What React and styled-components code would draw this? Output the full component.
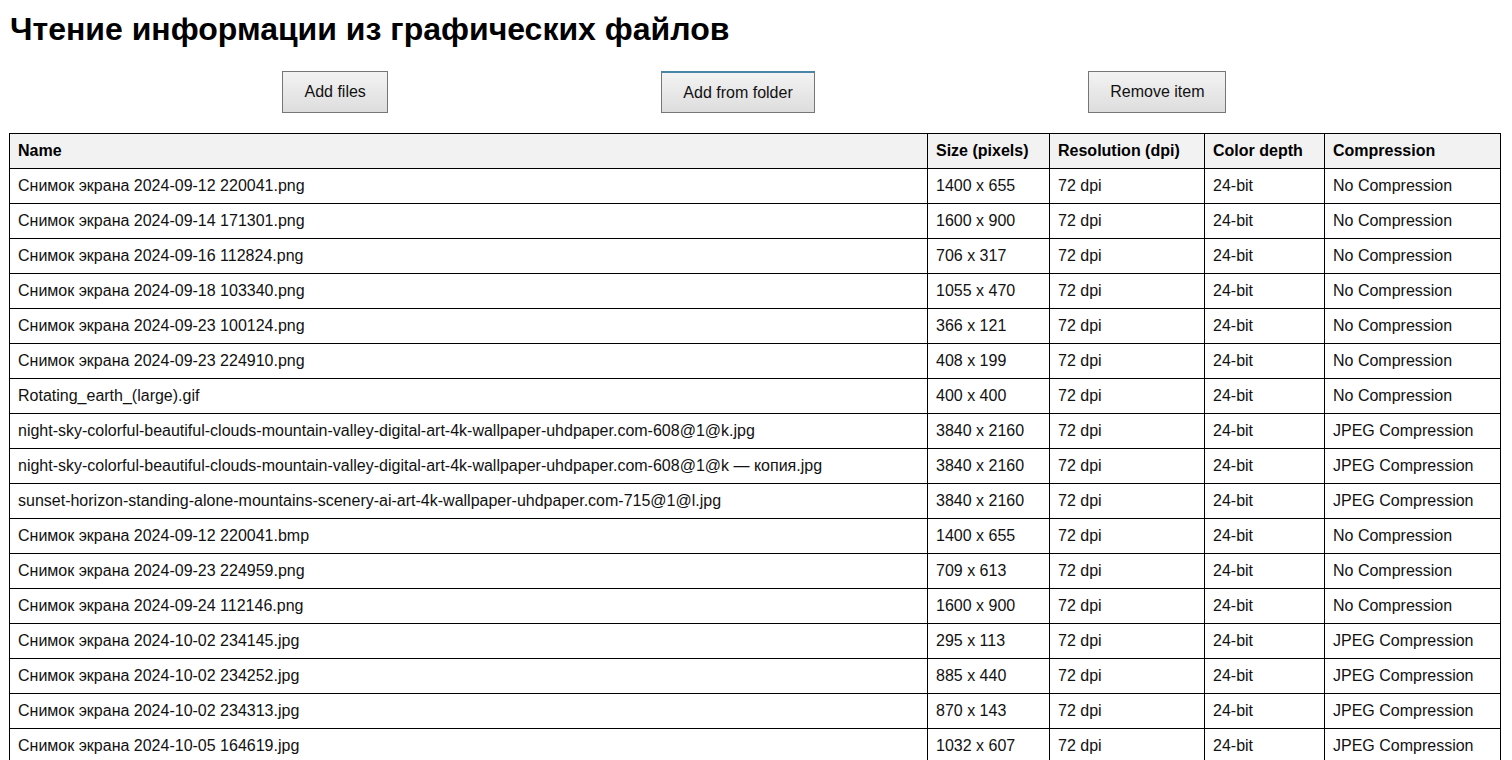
import React from "react";
import styled, { createGlobalStyle } from "styled-components";

const GlobalStyle = createGlobalStyle`
  html, body {
    margin: 0;
    padding: 0;
    background: #ffffff;
    font-family: "Liberation Sans", Arial, sans-serif;
    color: #000;
  }
`;

const Page = styled.div`
  padding: 0 12px 0 9px;
`;

const Title = styled.h1`
  margin: 0;
  padding: 11px 0 0 1px;
  font-size: 32px;
  line-height: 37px;
  font-weight: 700;
`;

const Toolbar = styled.div`
  display: flex;
  justify-content: space-evenly;
  margin: 23px 0 20px 0;
`;

const Button = styled.button`
  height: 42px;
  padding: 0 21px;
  font-family: "Liberation Sans", Arial, sans-serif;
  font-size: 16px;
  color: #111;
  background: linear-gradient(#f3f3f3, #dddddd);
  border: 1px solid #767676;
  border-top-color: ${(p) => (p.$focused ? "#4a86a8" : "#767676")};
  border-top-width: ${(p) => (p.$focused ? "2px" : "1px")};
  cursor: pointer;
`;

const Table = styled.table`
  width: 1491px;
  border-collapse: collapse;
  table-layout: fixed;
  font-size: 16px;
`;

const HeadCell = styled.th`
  box-sizing: border-box;
  width: ${(p) => p.$w}px;
  text-align: left;
  font-weight: 700;
  background: #f2f2f2;
  border: 1px solid #000;
  padding: 8px 8px;
  line-height: 18px;
`;

const Cell = styled.td`
  border: 1px solid #000;
  padding: 8px 8px;
  line-height: 18px;
  white-space: nowrap;
  overflow: hidden;
  color: #111;
`;

const columns = [
  { key: "name", title: "Name", w: 918 },
  { key: "size", title: "Size (pixels)", w: 122 },
  { key: "res", title: "Resolution (dpi)", w: 155 },
  { key: "depth", title: "Color depth", w: 120 },
  { key: "comp", title: "Compression", w: 176 },
];

const NO = "No Compression";
const JPEG = "JPEG Compression";

const rows = [
  ["Снимок экрана 2024-09-12 220041.png", "1400 x 655", NO],
  ["Снимок экрана 2024-09-14 171301.png", "1600 x 900", NO],
  ["Снимок экрана 2024-09-16 112824.png", "706 x 317", NO],
  ["Снимок экрана 2024-09-18 103340.png", "1055 x 470", NO],
  ["Снимок экрана 2024-09-23 100124.png", "366 x 121", NO],
  ["Снимок экрана 2024-09-23 224910.png", "408 x 199", NO],
  ["Rotating_earth_(large).gif", "400 x 400", NO],
  [
    "night-sky-colorful-beautiful-clouds-mountain-valley-digital-art-4k-wallpaper-uhdpaper.com-608@1@k.jpg",
    "3840 x 2160",
    JPEG,
  ],
  [
    "night-sky-colorful-beautiful-clouds-mountain-valley-digital-art-4k-wallpaper-uhdpaper.com-608@1@k — копия.jpg",
    "3840 x 2160",
    JPEG,
  ],
  [
    "sunset-horizon-standing-alone-mountains-scenery-ai-art-4k-wallpaper-uhdpaper.com-715@1@l.jpg",
    "3840 x 2160",
    JPEG,
  ],
  ["Снимок экрана 2024-09-12 220041.bmp", "1400 x 655", NO],
  ["Снимок экрана 2024-09-23 224959.png", "709 x 613", NO],
  ["Снимок экрана 2024-09-24 112146.png", "1600 x 900", NO],
  ["Снимок экрана 2024-10-02 234145.jpg", "295 x 113", JPEG],
  ["Снимок экрана 2024-10-02 234252.jpg", "885 x 440", JPEG],
  ["Снимок экрана 2024-10-02 234313.jpg", "870 x 143", JPEG],
  ["Снимок экрана 2024-10-05 164619.jpg", "1032 x 607", JPEG],
];

export default function App() {
  return (
    <Page>
      <GlobalStyle />
      <Title>Чтение информации из графических файлов</Title>
      <Toolbar>
        <Button>Add files</Button>
        <Button $focused>Add from folder</Button>
        <Button>Remove item</Button>
      </Toolbar>
      <Table>
        <thead>
          <tr>
            {columns.map((c) => (
              <HeadCell key={c.key} $w={c.w}>
                {c.title}
              </HeadCell>
            ))}
          </tr>
        </thead>
        <tbody>
          {rows.map(([name, size, comp], i) => (
            <tr key={i}>
              <Cell>{name}</Cell>
              <Cell>{size}</Cell>
              <Cell>72 dpi</Cell>
              <Cell>24-bit</Cell>
              <Cell>{comp}</Cell>
            </tr>
          ))}
        </tbody>
      </Table>
    </Page>
  );
}
